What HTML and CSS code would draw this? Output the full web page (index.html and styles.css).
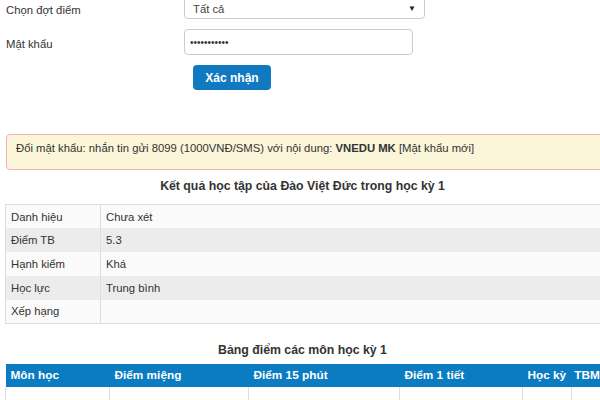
FILE: index.html
```html
<!DOCTYPE html>
<html lang="vi">
<head>
    <meta charset="UTF-8">
    <meta name="viewport" content="width=device-width, initial-scale=1.0">
    <title>Kết quả học tập</title>
    <link rel="stylesheet" href="styles.css">
</head>
<body>
    <div class="page">
        <form class="login">
            <div class="form-row">
                <label>Chọn đợt điểm</label>
                <div class="select">
                    <span>Tất cả</span>
                    <span class="caret">&#9660;</span>
                </div>
            </div>
            <div class="form-row">
                <label>Mật khẩu</label>
                <input type="password" class="input" value="12345678901">
            </div>
            <div class="form-row">
                <label></label>
                <button type="button" class="btn">Xác nhận</button>
            </div>
        </form>

        <div class="alert">
            Đổi mật khẩu: nhắn tin gửi 8099 (1000VNĐ/SMS) với nội dung: <b>VNEDU MK</b> [Mật khẩu mới]
        </div>

        <h3 class="title">Kết quả học tập của Đào Việt Đức trong học kỳ 1</h3>
        <table class="summary">
            <tr><td class="key">Danh hiệu</td><td>Chưa xét</td></tr>
            <tr><td class="key">Điểm TB</td><td>5.3</td></tr>
            <tr><td class="key">Hạnh kiểm</td><td>Khá</td></tr>
            <tr><td class="key">Học lực</td><td>Trung bình</td></tr>
            <tr><td class="key">Xếp hạng</td><td></td></tr>
        </table>

        <h3 class="title second">Bảng điểm các môn học kỳ 1</h3>
        <table class="scores">
            <tr>
                <th class="c1">Môn học</th>
                <th class="c2">Điểm miệng</th>
                <th class="c3">Điểm 15 phút</th>
                <th class="c4">Điểm 1 tiết</th>
                <th class="c5">Học kỳ</th>
                <th class="c6">TBM</th>
            </tr>
            <tr>
                <td></td><td></td><td></td><td></td><td></td><td></td>
            </tr>
        </table>
    </div>
</body>
</html>
```

FILE: styles.css
```css
*{
    padding: 0;
    margin: 0;
    box-sizing: border-box;
}
body{
    font-family: "Liberation Sans", Arial, sans-serif;
    font-size: 11.3px;
    color: #333;
    background-color: #fff;
    overflow: hidden;
}
.page{
    width: 640px;
    margin-top: -3px;
    padding-left: 5px;
}
.login{
    display: flex;
    flex-direction: column;
    gap: 10px;
}
.form-row{
    display: flex;
    align-items: center;
}
.form-row label{
    width: 179px;
    padding-left: 1px;
    padding-top: 3px;
}
.select{
    width: 241px;
    height: 22px;
    border: 1px solid #ccc;
    border-radius: 4px;
    display: flex;
    align-items: center;
    justify-content: space-between;
    padding: 1px 8px 0;
    color: #444;
}
.select .caret{
    font-size: 8px;
    color: #222;
}
.input{
    width: 229px;
    height: 26px;
    border: 1px solid #ccc;
    border-radius: 4px;
    padding: 0 5px;
    font-size: 10px;
    color: #333;
    outline: none;
}
.btn{
    margin-left: 9px;
    width: 78px;
    height: 25px;
    background-color: #1179c0;
    color: #fff;
    font-family: "Liberation Sans", Arial, sans-serif;
    font-size: 12px;
    font-weight: bold;
    border: none;
    border-radius: 4px;
}
.alert{
    margin-top: 44px;
    margin-left: 1px;
    height: 36px;
    background-color: #fbf5d9;
    border: 1px solid #f0b2ae;
    border-radius: 4px;
    padding: 7px 9px;
    color: #333;
}
.title{
    font-size: 12.3px;
    font-weight: bold;
    text-align: center;
    width: 595px;
    margin-top: 9px;
    height: 25px;
}
.title.second{
    margin-top: 19px;
    height: 21px;
}
table{
    border-collapse: collapse;
    width: 635px;
}
.summary{
    border-top: 1px solid #ddd;
    border-bottom: 1px solid #ddd;
    border-left: 1px solid #ddd;
}
.summary td{
    height: 23.8px;
    padding: 0 5px;
    border-right: 1px solid #ddd;
}
.summary td.key{
    width: 95px;
}
.summary tr:nth-child(odd){
    background-color: #fafafa;
}
.summary tr:nth-child(even){
    background-color: #ececec;
}
.scores th{
    background-color: #0b7cc2;
    color: #fff;
    font-size: 11.8px;
    font-weight: bold;
    text-align: left;
    white-space: nowrap;
    height: 23px;
    padding: 0 5px;
}
.scores td{
    height: 14px;
    border-left: 1px solid #ddd;
}
.scores th.c1{ width: 104px; }
.scores th.c2{ width: 139px; }
.scores th.c3{ width: 151px; }
.scores th.c4{ width: 123px; }
.scores th.c5{ width: 48px; }
.scores th.c6{ padding-left: 3px; }
```
